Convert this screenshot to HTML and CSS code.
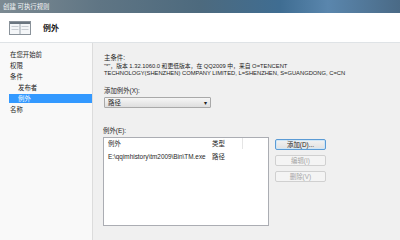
FILE: index.html
```html
<!DOCTYPE html>
<html lang="zh-CN">
<head>
<meta charset="utf-8">
<title>创建 可执行规则</title>
<link rel="stylesheet" href="styles.css">
</head>
<body>
<div class="window">
  <div class="titlebar">创建 可执行规则</div>
  <div class="header">
    <svg class="hicon" width="22" height="14" viewBox="0 0 22 14">
      <rect x="0.5" y="0.5" width="21" height="13" fill="#f4f6f8" stroke="#8a929a"/>
      <rect x="1" y="1" width="20" height="2" fill="#6b7680"/>
      <line x1="11" y1="3" x2="11" y2="13" stroke="#9aa3ab"/>
      <rect x="2.5" y="5" width="7" height="1" fill="#c8cdd2"/>
      <rect x="2.5" y="8" width="7" height="1" fill="#c8cdd2"/>
      <rect x="12.5" y="5" width="7" height="1" fill="#c8cdd2"/>
      <rect x="12.5" y="8" width="7" height="1" fill="#c8cdd2"/>
    </svg>
    <span class="htitle">例外</span>
  </div>
  <div class="main">
    <div class="sidebar">
      <div class="nav">在您开始前</div>
      <div class="nav">权限</div>
      <div class="nav">条件</div>
      <div class="nav sub">发布者</div>
      <div class="nav sub sel">例外</div>
      <div class="nav">名称</div>
    </div>
    <div class="content">
      <div class="cond">
        <div>主条件:</div>
        <div>"*"，版本 1.32.1060.0 和更低版本，在 QQ2009 中，来自 O=TENCENT</div>
        <div>TECHNOLOGY(SHENZHEN) COMPANY LIMITED, L=SHENZHEN, S=GUANGDONG, C=CN</div>
      </div>
      <div class="lbl add">添加例外(X):</div>
      <div class="select"><span>路径</span><span class="arrow">▾</span></div>
      <div class="lbl exc">例外(E):</div>
      <div class="listrow">
        <div class="list">
          <div class="lhead"><span class="c1">例外</span><span class="c2">类型</span><span class="c3"></span></div>
          <div class="lrow"><span class="c1">E:\qqimhistory\tm2009\Bin\TM.exe</span><span class="c2">路径</span></div>
        </div>
        <div class="buttons">
          <div class="btn primary">添加(D)...</div>
          <div class="btn disabled">编辑(I)</div>
          <div class="btn disabled">删除(V)</div>
        </div>
      </div>
    </div>
  </div>
</div>
</body>
</html>
```
FILE: styles.css
```css
html, body {
  margin: 0;
  padding: 0;
}
body {
  width: 400px;
  height: 240px;
  overflow: hidden;
  font-family: "Liberation Sans", "Noto Sans CJK SC", sans-serif;
  font-size: 6.4px;
  color: #1e1e1e;
}
.window {
  width: 400px;
  height: 240px;
  display: flex;
  flex-direction: column;
  background: #f0f0f0;
}
.titlebar {
  height: 13px;
  flex: none;
  background: linear-gradient(90deg, #7c8a92 0%, #5f7584 25%, #4d6a7e 50%, #3f6d92 70%, #5a86ad 82%, #4a6a86 100%);
  color: #f4f6f8;
  font-size: 6.4px;
  line-height: 13px;
  padding-left: 3px;
}
.header {
  height: 29px;
  flex: none;
  background: #ffffff;
  border-bottom: 1px solid #dfe3e6;
  display: flex;
  align-items: center;
  padding-left: 9px;
}
.hicon {
  display: block;
}
.htitle {
  margin-left: 12px;
  font-weight: bold;
  font-size: 8px;
  color: #1a1a1a;
}
.main {
  flex: 1;
  display: flex;
}
.sidebar {
  width: 93px;
  flex: none;
  background: #f9f9f9;
  border-right: 1px solid #dcdcdc;
  padding-top: 6px;
  box-sizing: border-box;
}
.nav {
  height: 11px;
  line-height: 11px;
  padding-left: 10px;
  white-space: nowrap;
}
.nav.sub {
  padding-left: 18px;
}
.nav.sel {
  background: #3399ff;
  color: #ffffff;
  margin-left: 9px;
  padding-left: 9px;
  height: 9px;
  line-height: 9px;
  margin-top: 1px;
  margin-bottom: 1px;
}
.content {
  flex: 1;
  padding: 11px 0 0 11px;
  display: flex;
  flex-direction: column;
  align-items: flex-start;
}
.cond {
  font-size: 5.8px;
}
.cond div {
  line-height: 7.5px;
  white-space: nowrap;
}
.cond div:first-child {
  margin-bottom: 1px;
  font-size: 6.4px;
}
.lbl {
  line-height: 8px;
}
.add {
  margin-top: 9px;
}
.select {
  margin-top: 2px;
  margin-left: 0;
  width: 107px;
  height: 11px;
  box-sizing: border-box;
  border: 1px solid #a9a9a9;
  border-radius: 1px;
  background: linear-gradient(#f6f6f6, #dedede);
  display: flex;
  align-items: center;
  justify-content: space-between;
  padding: 0 3px 0 3px;
}
.arrow {
  font-size: 6px;
  color: #222;
}
.exc {
  margin-top: 19px;
  margin-left: -1px;
}
.listrow {
  display: flex;
  align-items: flex-start;
  margin-top: 2px;
  margin-left: -1px;
}
.list {
  width: 166px;
  height: 89px;
  box-sizing: border-box;
  background: #ffffff;
  border: 1px solid #abadb3;
}
.lhead, .lrow {
  display: flex;
  height: 11px;
  line-height: 11px;
  white-space: nowrap;
}
.lhead .c3 {
  flex: 1;
  border-left: 1px solid #e5e5e5;
  height: 11px;
}
.lrow {
  margin-top: 2px;
}
.c1 {
  width: 104px;
  padding-left: 4px;
}
.c2 {
  width: 30px;
}
.buttons {
  display: flex;
  flex-direction: column;
  gap: 5px;
  margin-left: 6px;
  margin-top: 2px;
}
.btn {
  width: 51px;
  height: 11px;
  box-sizing: border-box;
  border: 1px solid #adadad;
  border-radius: 2px;
  background: linear-gradient(#f2f2f2, #e1e1e1);
  text-align: center;
  line-height: 9px;
}
.btn.primary {
  border-color: #5b9bd5;
  box-shadow: inset 0 0 0 1px #cfe6f7;
}
.btn.disabled {
  color: #a6a6a6;
  border-color: #d0d0d0;
  background: #f4f4f4;
}
```
